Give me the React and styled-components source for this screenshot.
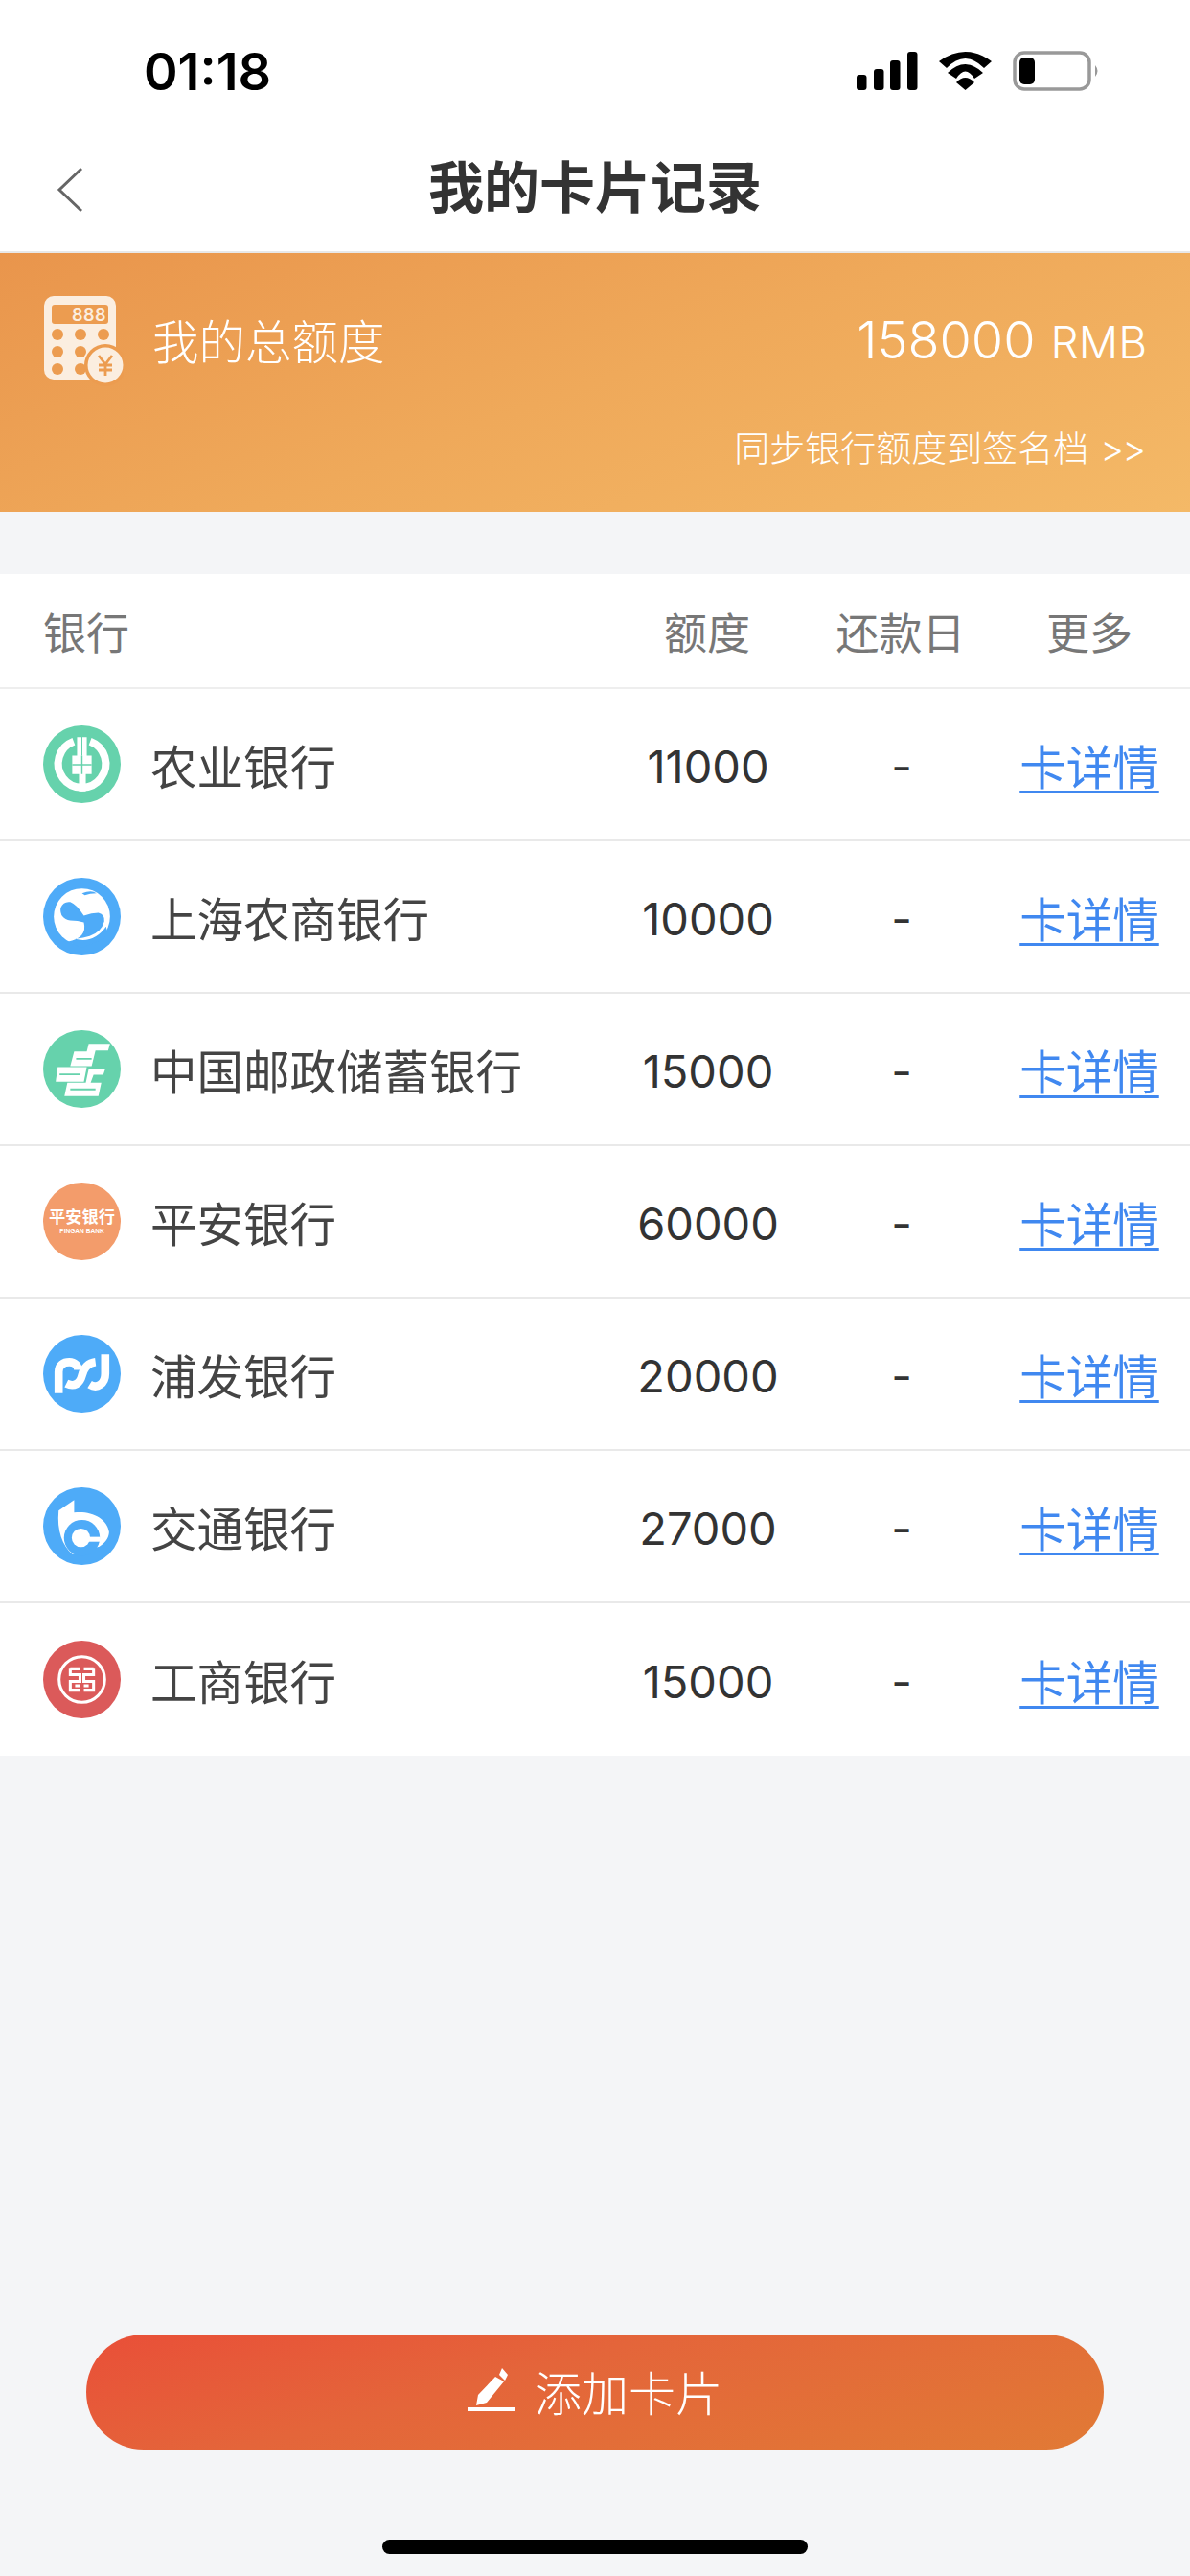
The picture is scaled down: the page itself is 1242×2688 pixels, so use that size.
import styled, { createGlobalStyle } from "styled-components";

const GlobalStyle = createGlobalStyle`
  html, body {
    margin: 0;
    padding: 0;
    background: #f4f5f7;
    font-family: "Noto Sans CJK SC", "Noto Sans", sans-serif;
  }
`;

const Page = styled.div`
  width: 1242px;
  height: 2688px;
  display: flex;
  flex-direction: column;
  background: #f4f5f7;
  overflow: hidden;
`;

const StatusBar = styled.div`
  height: 120px;
  background: #fff;
  display: flex;
  align-items: center;
  justify-content: space-between;
  padding: 28px 94px 0 150px;
  box-sizing: border-box;
`;

const Time = styled.div`
  font-family: Inter, "Liberation Sans", sans-serif;
  font-size: 54px;
  font-weight: 600;
  color: #000;
`;

const NavBar = styled.div`
  height: 144px;
  background: #fff;
  border-bottom: 2px solid #e8e8e8;
  box-sizing: border-box;
  display: flex;
  align-items: center;
  justify-content: center;
  position: relative;
`;

const BackIcon = styled.svg`
  position: absolute;
  left: 58px;
  top: 54px;
`;

const Title = styled.h1`
  margin: 2px 0 0;
  font-size: 58px;
  font-weight: 700;
  color: #333;
`;

const Banner = styled.div`
  height: 270px;
  background: linear-gradient(160deg, #e9954c 0%, #efa95a 50%, #f4b967 100%);
  box-sizing: border-box;
  padding: 41px 45px 0;
  color: #fff;
`;

const BannerTop = styled.div`
  display: flex;
  align-items: center;
  justify-content: space-between;
`;

const BannerLabel = styled.div`
  display: flex;
  align-items: center;
  gap: 30px;
  font-size: 48.5px;
  font-weight: 300;
`;

const Amount = styled.div`
  font-family: Inter, sans-serif;
  font-weight: 300;
  font-size: 54px;
  display: flex;
  align-items: baseline;
  gap: 16px;
`;

const Unit = styled.span`
  font-size: 46px;
`;

const SyncLink = styled.div`
  margin-top: 36px;
  padding-right: 3px;
  text-align: right;
  font-size: 37px;
  font-weight: 300;
`;

const Arrows = styled.span`
  margin-left: 12px;
  font-family: Inter, sans-serif;
  font-size: 38px;
  letter-spacing: -2px;
`;

const Table = styled.div`
  margin-top: 65px;
  background: #fff;
`;

const Grid = styled.div`
  display: grid;
  grid-template-columns: 638px 200px 204px 1fr;
  align-items: center;
  padding-right: 10px;
  box-sizing: border-box;
`;

const HeaderRow = styled(Grid)`
  height: 120px;
  border-bottom: 2px solid #eeeeee;
  font-size: 45px;
  color: #777;
`;

const Row = styled(Grid)`
  height: 159px;
  border-bottom: ${(props) => (props.$last ? "none" : "2px solid #e9e9e9")};
  font-size: 48.5px;
  color: #444;
`;

const HeaderCell = styled.div`
  text-align: center;
`;

const HeaderBank = styled(HeaderCell)`
  text-align: left;
  padding-left: 45px;
`;

const BankCell = styled.div`
  display: flex;
  align-items: center;
  gap: 31px;
  padding-left: 45px;
`;

const Logo = styled.svg`
  flex: none;
  display: block;
`;

const NumberCell = styled.div`
  padding: 3px 0 0 2px;
  text-align: center;
  font-family: Inter, sans-serif;
  font-size: 47px;
  font-weight: 400;
  color: #333;
`;

const DetailLink = styled.a`
  text-align: center;
  color: #4088f0;
  text-decoration: underline;
  text-decoration-thickness: 3px;
  text-underline-offset: 6px;
`;

const Spacer = styled.div`
  flex: 1;
`;

const AddButton = styled.button`
  align-self: center;
  width: 1062px;
  height: 120px;
  border: none;
  border-radius: 60px;
  background: linear-gradient(165deg, #e94f38 0%, #e4653a 40%, #e17a35 100%);
  color: #fff;
  font-family: inherit;
  font-size: 49px;
  font-weight: 300;
  display: flex;
  align-items: center;
  justify-content: center;
  gap: 20px;
  padding: 0 0 4px;
`;

const HomeWrap = styled.div`
  height: 132px;
  display: flex;
  align-items: flex-start;
  justify-content: center;
  padding-top: 94px;
  box-sizing: border-box;
`;

const HomeBar = styled.div`
  width: 444px;
  height: 15px;
  border-radius: 8px;
  background: #000;
`;

const StatusIcons = () => (
  <svg width="254" height="42" viewBox="0 0 254 42">
    <rect x="0" y="25" width="10.5" height="16" rx="3" fill="#000" />
    <rect x="18" y="19" width="10.5" height="22" rx="3" fill="#000" />
    <rect x="35" y="10" width="10.5" height="31" rx="3" fill="#000" />
    <rect x="53" y="1" width="10.5" height="40" rx="3" fill="#000" />
    <path d="M86 11 Q113.5 -9 141 11 L133 18 Q113.5 -2 94 18Z" fill="#000" />
    <path d="M95 23 Q113.5 5 132 23 L123 29 Q113.5 14 104 29Z" fill="#000" />
    <path d="M104 33 Q113.5 23 123 33 L113.5 41Z" fill="#000" />
    <rect x="165" y="2" width="78" height="38" rx="10" fill="none" stroke="#999" strokeWidth="3.5" />
    <rect x="170" y="7" width="16" height="28" rx="5" fill="#000" />
    <path d="M249 15 Q254 21 249 27Z" fill="#999" />
  </svg>
);

const calcKeys = [
  [60, 349], [84, 349], [108, 349],
  [60, 367], [84, 367], [108, 367],
  [60, 385], [84, 385],
];

const CalculatorIcon = () => (
  <svg width="84" height="98" viewBox="45 305 84 98" style={{ flex: "none" }}>
    <rect x="46" y="309" width="75" height="87" rx="10" fill="#fbeee0" />
    <rect x="54" y="318" width="59" height="20" rx="3" fill="#ec9c50" />
    <text x="111" y="335" textAnchor="end" fontFamily="Inter, sans-serif" fontSize="18" fontWeight="600" letterSpacing="0.5" fill="#fbeee0">888</text>
    {calcKeys.map(([x, y]) => (
      <circle key={`${x}-${y}`} cx={x} cy={y} r="6" fill="#ec9c50" />
    ))}
    <circle cx="110" cy="381" r="22" fill="#ec9c50" />
    <circle cx="110" cy="381" r="18.5" fill="#fbeee0" />
    <path d="M103 371 L110 380 L117 371 M110 380 V392 M103 381 H117 M103 386 H117" fill="none" stroke="#ec9c50" strokeWidth="2.8" />
  </svg>
);

const AbcLogo = () => (
  <>
    <circle cx="40" cy="40" r="40" fill="#66d2ac" />
    <path d="M31.5 16.5 A24.5 24.5 0 1 0 48.5 16.5" fill="none" stroke="#fff" strokeWidth="8" />
    <path d="M35 12 H39.5 V31 H40.5 V12 H45 V31 H50 V50 H44 V68 H37 V50 H30 V31 H35Z" fill="#fff" />
    <path d="M30 40.5 H50 M40 31 V50" stroke="#66d2ac" strokeWidth="1.4" />
  </>
);

const ShanghaiLogo = () => (
  <>
    <circle cx="40" cy="40" r="40" fill="#4eabf8" />
    <circle cx="40" cy="40" r="29" fill="#fff" />
    <path d="M18 31 Q21 24 28 25 Q34 27 42 39 Q50 36 57 36 Q64 38 63 45 Q60 56 48 60 Q42 62 33 63 Q52 68 65 50 Q68 60 60 64 L40 72 L25 66 Q46 62 42 46 Q36 44 28 44 Q17 42 18 31Z" fill="#4eabf8" />
    <path d="M40 16 Q50 12 55 16 Q48 16 43 18Z" fill="#4eabf8" />
  </>
);

const PostalLogo = () => (
  <>
    <circle cx="40" cy="40" r="40" fill="#66d2ac" />
    <path d="M47 14 H69 L67 21 H54 L50 37 H28 L32 22 H45Z" fill="#fff" />
    <path d="M15 38 H45 L42 53 H13Z" fill="#fff" />
    <path d="M47 40 H64 L62 46 H52 L49 54 H60 L57 68 H22 L25 54 H44Z" fill="#fff" />
    <path d="M34 29.5 H50 M17 45.5 H38 M28 61 H54" stroke="#66d2ac" strokeWidth="1.8" />
  </>
);

const PinganLogo = () => (
  <>
    <circle cx="40" cy="40" r="40" fill="#f39c6b" />
    <text x="40" y="41" textAnchor="middle" fontSize="17" fontWeight="700" fill="#fff">平安银行</text>
    <text x="40" y="52" textAnchor="middle" fontSize="6.5" fontWeight="700" fill="#fff" fontFamily="Liberation Sans, sans-serif">PINGAN BANK</text>
  </>
);

const SpdLogo = () => (
  <>
    <circle cx="40" cy="40" r="40" fill="#4eabf8" />
    <g fill="none" stroke="#fff" strokeWidth="8.5">
      <path d="M16 60 V38 C16 31 21 28 27 28 C33 28 36 32 36 36" />
      <path d="M24 50 C32 54 38 50 40 42 C42 34 46 29 54 28" />
      <path d="M48 51 C56 56 64 50 64 40 V20" />
    </g>
  </>
);

const BocomLogo = () => (
  <>
    <circle cx="40" cy="40" r="40" fill="#4eabf8" />
    <path d="M32 13 L16 24 C14 45 20 60 30 69 L58 61 C66 56 68 50 68 46 C66 32 50 24 32 26Z" fill="#fff" />
    <circle cx="40" cy="52" r="18.5" fill="#4eabf8" />
    <circle cx="39" cy="52" r="9.5" fill="#fff" />
    <rect x="40" y="51" width="19" height="5" fill="#fff" />
  </>
);

const IcbcLogo = () => (
  <>
    <circle cx="40" cy="40" r="40" fill="#db5a5a" />
    <circle cx="40" cy="40" r="23.5" fill="none" stroke="#fff" strokeWidth="3" />
    <path d="M28 29 H38 M42 29 H52 M28 29 V35 H38 V42 H28 V51 H38 M52 29 V35 H42 V42 H52 V51 H42 M33 46.5 H38 M42 46.5 H47" fill="none" stroke="#fff" strokeWidth="3" />
  </>
);

const banks = [
  { name: "农业银行", quota: "11000", Mark: AbcLogo },
  { name: "上海农商银行", quota: "10000", Mark: ShanghaiLogo },
  { name: "中国邮政储蓄银行", quota: "15000", Mark: PostalLogo },
  { name: "平安银行", quota: "60000", Mark: PinganLogo },
  { name: "浦发银行", quota: "20000", Mark: SpdLogo },
  { name: "交通银行", quota: "27000", Mark: BocomLogo },
  { name: "工商银行", quota: "15000", Mark: IcbcLogo },
];

const App = () => (
  <>
    <GlobalStyle />
    <Page>
      <StatusBar>
        <Time>01:18</Time>
        <StatusIcons />
      </StatusBar>
      <NavBar>
        <BackIcon width="30" height="48" viewBox="0 0 30 48">
          <path d="M27 2 L4 24 L27 46" fill="none" stroke="#666" strokeWidth="3" />
        </BackIcon>
        <Title>我的卡片记录</Title>
      </NavBar>
      <Banner>
        <BannerTop>
          <BannerLabel>
            <CalculatorIcon />
            我的总额度
          </BannerLabel>
          <Amount>
            158000 <Unit>RMB</Unit>
          </Amount>
        </BannerTop>
        <SyncLink>
          同步银行额度到签名档<Arrows>&gt;&gt;</Arrows>
        </SyncLink>
      </Banner>
      <Table>
        <HeaderRow>
          <HeaderBank>银行</HeaderBank>
          <HeaderCell>额度</HeaderCell>
          <HeaderCell>还款日</HeaderCell>
          <HeaderCell>更多</HeaderCell>
        </HeaderRow>
        {banks.map(({ name, quota, Mark }, index) => (
          <Row key={name} $last={index === banks.length - 1}>
            <BankCell>
              <Logo width="81" height="81" viewBox="0 0 80 80">
                <Mark />
              </Logo>
              {name}
            </BankCell>
            <NumberCell>{quota}</NumberCell>
            <NumberCell>-</NumberCell>
            <DetailLink>卡详情</DetailLink>
          </Row>
        ))}
      </Table>
      <Spacer />
      <AddButton>
        <svg width="50" height="46" viewBox="0 0 50 46">
          <path d="M36 0 L42 7 L39 13 L33 7Z M29 9 L38 14 L20 36 L9 39 L11 28Z" fill="#fff" />
          <rect x="0" y="41" width="50" height="4" fill="#fff" />
        </svg>
        添加卡片
      </AddButton>
      <HomeWrap>
        <HomeBar />
      </HomeWrap>
    </Page>
  </>
);

export default App;
